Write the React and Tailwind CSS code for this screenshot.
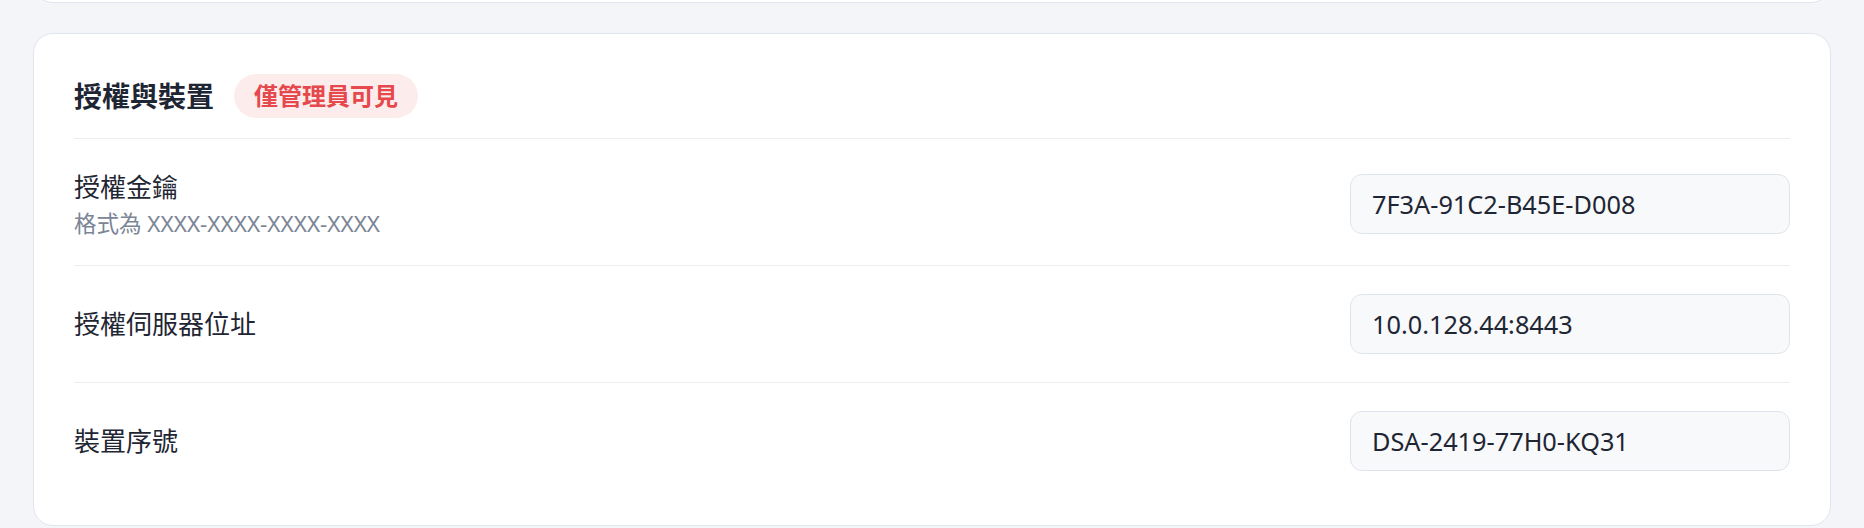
import React from "react";

const FONT = {
  fontFamily:
    '"Noto Sans", "Open Sans", "Noto Sans CJK TC", sans-serif',
};

function Row({ label, sub, value, first, last }) {
  return (
    <div
      className={
        "flex items-center justify-between " +
        (first ? "pt-[30px] pb-[26px] " : "py-[28px] ") +
        (last ? "" : "border-b border-[#eceef3]")
      }
    >
      <div className="flex flex-col">
        <div className="text-[26px] leading-[36px] text-[#1f2633] font-normal">
          {label}
        </div>
        {sub && (
          <div className="mt-[3px] text-[22.5px] leading-[31px] text-[#7b8595]">
            {sub}
          </div>
        )}
      </div>
      <input
        readOnly
        defaultValue={value}
        className="w-[440px] h-[60px] rounded-[12px] border border-[#dfe3ec] bg-[#f8f9fb] px-[21px] text-[25.3px] text-[#1f2633] outline-none"
      />
    </div>
  );
}

export default function App() {
  return (
    <div
      className="w-full h-[528px] overflow-hidden bg-[#f4f5f9] px-[33px] flex flex-col"
      style={FONT}
    >
      <div className="shrink-0 -mt-[60px] h-[63px] rounded-[20px] border border-[#e1e5ee] bg-white" />
      <div className="shrink-0 mt-[30px] rounded-[20px] border border-[#e1e5ee] bg-white px-[40px] pt-[40px] pb-[26px]">
        <div className="flex items-center gap-[20px] pb-[20px] border-b border-[#eceef3]">
          <h2 className="text-[28px] font-bold leading-[44px] text-[#1e2533]">
            授權與裝置
          </h2>
          <span className="h-[44px] flex items-center rounded-full bg-[#fdecec] px-[20px] text-[24px] font-bold text-[#e5484d]">
            僅管理員可見
          </span>
        </div>
        <Row
          first
          label="授權金鑰"
          sub="格式為 XXXX-XXXX-XXXX-XXXX"
          value="7F3A-91C2-B45E-D008"
        />
        <Row label="授權伺服器位址" value="10.0.128.44:8443" />
        <Row last label="裝置序號" value="DSA-2419-77H0-KQ31" />
      </div>
    </div>
  );
}
